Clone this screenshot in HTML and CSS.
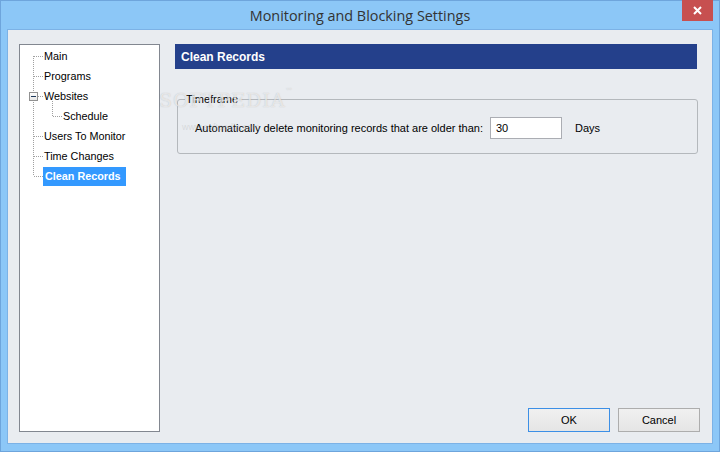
FILE: index.html
```html
<!DOCTYPE html>
<html>
<head>
<meta charset="utf-8">
<title>Monitoring and Blocking Settings</title>
<link rel="stylesheet" href="styles.css">
</head>
<body>
<div class="window">
  <div class="titlebar">
    <span class="title">Monitoring and Blocking Settings</span>
    <button class="close" aria-label="Close">
      <svg width="31" height="21" viewBox="0 0 31 21"><path d="M12 7 L19 14 M19 7 L12 14" stroke="#fff" stroke-width="2" fill="none"/></svg>
    </button>
  </div>
  <div class="client">
    <div class="tree-box">
      <ul class="tree">
        <li><div class="row"><span class="label">Main</span></div></li>
        <li><div class="row"><span class="label">Programs</span></div></li>
        <li>
          <div class="row"><span class="expander"><span class="minus"></span></span><span class="label">Websites</span></div>
          <ul class="subtree">
            <li><div class="row"><span class="label">Schedule</span></div></li>
          </ul>
        </li>
        <li><div class="row"><span class="label">Users To Monitor</span></div></li>
        <li><div class="row"><span class="label">Time Changes</span></div></li>
        <li><div class="row"><span class="label selected">Clean Records</span></div></li>
      </ul>
    </div>
    <div class="panel">
      <div class="header">Clean Records</div>
      <fieldset class="group">
        <legend>Timeframe</legend>
        <div class="field-row">
          <span class="field-label">Automatically delete monitoring records that are older than:</span>
          <input class="days-input" type="text" value="30">
          <span class="unit">Days</span>
        </div>
      </fieldset>
      <div class="buttons">
        <button class="btn btn-default">OK</button>
        <button class="btn">Cancel</button>
      </div>
    </div>
    <div class="watermark">SOFTPEDIA<sup>™</sup></div>
    <div class="watermark-url">www.softpedia.com</div>
  </div>
</div>
</body>
</html>
```
FILE: styles.css
```css
html, body {
  margin: 0;
  padding: 0;
}
body {
  width: 720px;
  height: 452px;
  overflow: hidden;
  font-family: "Liberation Sans", Arial, sans-serif;
  font-size: 11px;
  color: #000;
}
.window {
  position: relative;
  box-sizing: border-box;
  width: 720px;
  height: 452px;
  background: #8cc7f7;
  border: 1px solid #6ea5dc;
  display: flex;
  flex-direction: column;
  padding: 0 6px 7px 6px;
}
.titlebar {
  height: 28px;
  display: flex;
  align-items: center;
  justify-content: center;
  flex: none;
}
.title {
  font-family: "Open Sans", "Noto Sans", sans-serif;
  font-size: 14.4px;
  color: #333;
  margin-top: 1px;
}
.close {
  position: absolute;
  top: -1px;
  right: 6px;
  width: 31px;
  height: 21px;
  padding: 0;
  border: 0;
  background: #c75050;
  display: block;
}
.close svg {
  display: block;
}
.client {
  position: relative;
  flex: 1;
  display: flex;
  background: #e9ecf0;
  border: 1px solid #7cb2e6;
  padding: 14px 12px 11px 11px;
  min-height: 0;
}
.tree-box {
  box-sizing: border-box;
  width: 141px;
  flex: none;
  background: #fff;
  border: 1px solid #828790;
}
.tree {
  list-style: none;
  margin: 0;
  padding: 1px 0 0 0;
  position: relative;
}
.tree::before {
  content: "";
  position: absolute;
  left: 13px;
  top: 11px;
  bottom: 10px;
  width: 1px;
  background: repeating-linear-gradient(to bottom, #a0a0a0 0 1px, transparent 1px 2px);
}
.tree li {
  margin: 0;
  padding: 0;
}
.row {
  position: relative;
  height: 20px;
  display: flex;
  align-items: center;
  padding-left: 14px;
}
.row::before {
  content: "";
  width: 9px;
  height: 1px;
  flex: none;
  background: repeating-linear-gradient(to right, #a0a0a0 0 1px, transparent 1px 2px);
}
.label {
  padding: 0 1px 0 1px;
  line-height: 19px;
  white-space: nowrap;
  font-size: 10.8px;
}
.label.selected {
  background: #3399ff;
  color: #fff;
  font-weight: bold;
  padding: 0 5px 0 2px;
}
.subtree {
  list-style: none;
  margin: 0;
  padding: 0;
  position: relative;
}
.subtree::before {
  content: "";
  position: absolute;
  left: 32px;
  top: -5px;
  height: 16px;
  width: 1px;
  background: repeating-linear-gradient(to bottom, #a0a0a0 0 1px, transparent 1px 2px);
}
.subtree .row {
  padding-left: 33px;
}
.expander {
  position: absolute;
  left: 9px;
  top: 6px;
  box-sizing: border-box;
  width: 9px;
  height: 9px;
  border: 1px solid #919191;
  background: linear-gradient(#ffffff, #e6e6e6);
  display: flex;
  align-items: center;
  justify-content: center;
}
.minus {
  width: 5px;
  height: 1px;
  background: #1e395b;
}
.panel {
  flex: 1;
  margin-left: 15px;
  display: flex;
  flex-direction: column;
  min-width: 0;
}
.header {
  height: 25px;
  margin-right: 3px;
  background: #24408b;
  color: #fff;
  font-weight: bold;
  font-size: 12px;
  display: flex;
  align-items: center;
  padding-left: 6px;
}
.group {
  margin: 23px 2px 0 2px;
  padding: 0 0 14px 7px;
  border: 1px solid #b4b8bc;
  border-radius: 3px;
  min-width: 0;
}
.group legend {
  padding: 0 1px;
  line-height: 14px;
  font-size: 11px;
}
.field-row {
  display: flex;
  align-items: center;
  padding-top: 11px;
  padding-left: 10px;
}
.days-input {
  box-sizing: border-box;
  width: 72px;
  height: 22px;
  margin: 0 0 0 7px;
  border: 1px solid #abadb3;
  padding: 0 0 0 5px;
  font-family: "Liberation Sans", Arial, sans-serif;
  font-size: 11px;
  color: #000;
  background: #fff;
  outline: none;
}
.unit {
  margin-left: 13px;
}
.buttons {
  margin-top: auto;
  display: flex;
  justify-content: flex-end;
  gap: 8px;
}
.btn {
  box-sizing: border-box;
  width: 82px;
  height: 24px;
  border: 1px solid #adadad;
  background: linear-gradient(#f0f0f0, #e5e5e5);
  font-family: "Liberation Sans", Arial, sans-serif;
  font-size: 11px;
  color: #000;
  padding: 0;
}
.btn-default {
  border-color: #3c8fe6;
}
.watermark {
  position: absolute;
  left: 151px;
  top: 59px;
  font-family: "DejaVu Serif", serif;
  font-size: 19px;
  letter-spacing: 1px;
  color: rgba(255, 255, 255, 0.6);
  text-shadow: 0 0 1px rgba(140, 140, 140, 0.5);
  pointer-events: none;
}
.watermark sup {
  font-size: 7px;
  vertical-align: top;
  position: relative;
  top: -2px;
}
.watermark-url {
  position: absolute;
  left: 174px;
  top: 92px;
  font-size: 9px;
  color: rgba(180, 180, 180, 0.35);
  pointer-events: none;
}
```
